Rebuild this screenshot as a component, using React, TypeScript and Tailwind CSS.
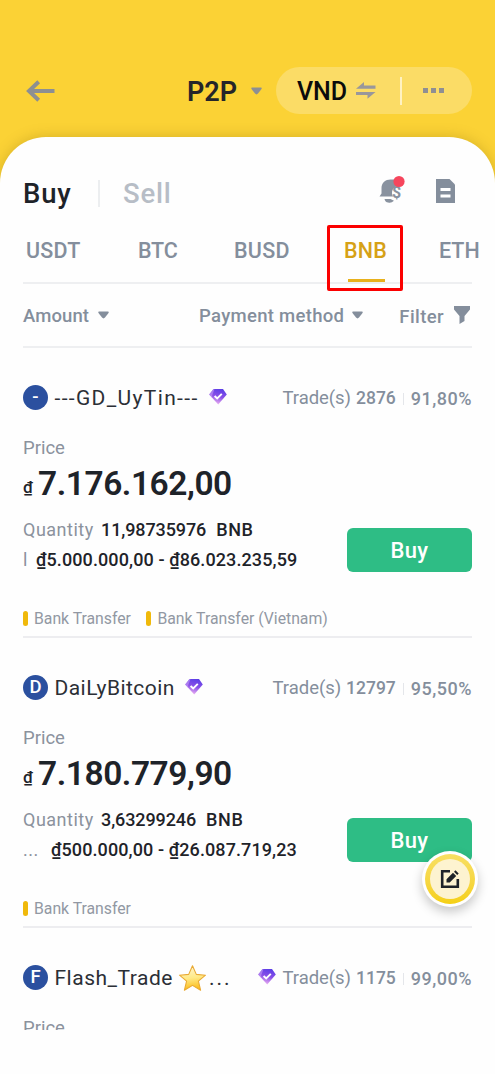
import React from "react";

const STRONG = "font-['Roboto',sans-serif] font-medium";
const MID = "font-['Roboto',sans-serif] font-[450]";
const TEXT = "font-['Roboto',sans-serif] font-normal";

function Caret({ className = "" }: { className?: string }) {
  return (
    <svg className={"h-[8px] w-[11px] shrink-0 " + className} viewBox="0 0 11 8" fill="currentColor">
      <path d="M1 .5h9q1.2.3.5 1.5L7 6.6q-1.5 1.6-3 0L.5 2Q-.2.8 1 .5Z" />
    </svg>
  );
}

function Gem() {
  return (
    <svg className="h-[18px] w-[20px]" viewBox="0 0 20 18">
      <defs>
        <linearGradient id="gem" x1=".7" y1="0" x2=".4" y2="1">
          <stop offset="0" stopColor="#5a3ee6" />
          <stop offset=".5" stopColor="#8a50e8" />
          <stop offset="1" stopColor="#f0b5f2" />
        </linearGradient>
      </defs>
      <path d="M5.500 1h9.500l3.800 5.600L10.200 16.400 1.200 6.600Z" fill="url(#gem)" />
      <path d="M1.200 6.600 5.500 1l1 .2-2.500 6.500v2Z" fill="#c49af5" opacity=".6" />
      <path d="m6.600 8 2.600 2.500 4.600-4.600" fill="none" stroke="#fff" strokeWidth="1.9" />
    </svg>
  );
}

function Star() {
  return (
    <svg className="h-[28px] w-[29px]" viewBox="0 0 29 28">
      <defs>
        <linearGradient id="star" x1=".4" y1="0" x2=".55" y2="1">
          <stop offset="0" stopColor="#fff6d2" />
          <stop offset=".5" stopColor="#ffe985" />
          <stop offset="1" stopColor="#fbb80f" />
        </linearGradient>
      </defs>
      <path
        d="M14.500 1.800 18.300 10.400l9.200.8-7.100 6 2.200 9-8.100-4.800-8.100 4.800 2.200-9-7.100-6 9.200-.8Z"
        fill="url(#star)"
        stroke="#e9aa35"
        strokeWidth="1.1"
        strokeLinejoin="round"
      />
    </svg>
  );
}

type Offer = {
  initial: string;
  name: string;
  nameTracking: string;
  star?: boolean;
  trades: string;
  rate: string;
  price: string;
  quantity: string;
  limitLabel: string;
  limitLabelWidth: string;
  limits: string;
  methods: string[];
};

const offers: Offer[] = [
  {
    initial: "-",
    name: "---GD_UyTin---",
    nameTracking: "tracking-[1.35px]",
    trades: "2876",
    rate: "91,80%",
    price: "7.176.162,00",
    quantity: "11,98735976",
    limitLabel: "l",
    limitLabelWidth: "w-[13px]",
    limits: "₫5.000.000,00 - ₫86.023.235,59",
    methods: ["Bank Transfer", "Bank Transfer (Vietnam)"],
  },
  {
    initial: "D",
    name: "DaiLyBitcoin",
    nameTracking: "tracking-[0.45px]",
    trades: "12797",
    rate: "95,50%",
    price: "7.180.779,90",
    quantity: "3,63299246",
    limitLabel: "...",
    limitLabelWidth: "w-[28px]",
    limits: "₫500.000,00 - ₫26.087.719,23",
    methods: ["Bank Transfer"],
  },
  {
    initial: "F",
    name: "Flash_Trade",
    nameTracking: "tracking-[0.5px]",
    star: true,
    trades: "1175",
    rate: "99,00%",
    price: "",
    quantity: "",
    limitLabel: "",
    limitLabelWidth: "",
    limits: "",
    methods: [],
  },
];

function OfferHead({ o }: { o: Offer }) {
  return (
    <div className="flex h-[26px] items-center whitespace-nowrap">
      <div className={"-mt-px flex size-[25px] items-center justify-center rounded-full bg-[#2b509f] text-[18.5px] leading-none text-white " + STRONG}>
        {o.initial}
      </div>
      <span className={"ml-[6.5px] text-[21px] leading-[26px] text-[#2b2f36] " + TEXT + " " + o.nameTracking}>{o.name}</span>
      {o.star && (
        <>
          <span className="ml-[5px]"><Star /></span>
          <span className={"ml-[2px] text-[21px] leading-[26px] tracking-[2px] text-[#2b2f36] " + TEXT}>...</span>
        </>
      )}
      <span className={o.star ? "ml-auto mr-[6px] -mt-[2px]" : "ml-[9px] mr-auto -mt-[2px]"}><Gem /></span>
      <div className="flex items-center pt-px text-[#848e9c]">
        <span className={"text-[18.5px] tracking-[-0.05px] " + TEXT}>Trade(s)</span>
        <span className={"ml-[5px] text-[17.5px] " + STRONG}>{o.trades}</span>
        <span className="mx-[7px] h-[12px] w-px bg-[#e4e6ea]" />
        <span className={"-mt-px text-[18px] tracking-[0.5px] " + STRONG}>{o.rate}</span>
      </div>
    </div>
  );
}

function OfferCard({ o }: { o: Offer }) {
  return (
    <section className="flex h-[290px] flex-col border-b-2 border-[#ededf0] pt-[37px]">
      <OfferHead o={o} />
      <div className={"mt-[26px] text-[18.5px] leading-[22px] text-[#8b929d] " + TEXT}>Price</div>
      <div className={"mt-[6px] flex h-[38px] items-baseline text-[#1e2329] " + STRONG}>
        <span className="relative -top-[2px] w-[15px] text-[17px]">₫</span>
        <span className="text-[33.5px] font-semibold leading-[38px] tracking-[-0.45px]">{o.price}</span>
      </div>
      <div className="mt-[8px] flex h-[76px] justify-between">
        <div className="whitespace-nowrap">
          <div className="mt-[6.5px] flex h-[24px] items-center text-[18px] leading-none">
            <span className={"w-[78px] tracking-[0.5px] text-[#8b929d] " + TEXT}>Quantity</span>
            <span className={"tracking-[-0.1px] text-[#1e2329] " + STRONG}>{o.quantity}</span>
            <span className={"ml-[10px] tracking-[0.6px] text-[#1e2329] " + STRONG}>BNB</span>
          </div>
          <div className="mt-[6.5px] flex h-[24px] items-center text-[18px] leading-none">
            <span className={"tracking-[0.5px] text-[#8b929d] " + TEXT + " " + o.limitLabelWidth}>{o.limitLabel}</span>
            <span className={"tracking-[0.1px] text-[#1e2329] " + STRONG}>{o.limits}</span>
          </div>
        </div>
        <button className={"mt-[17px] h-[44px] w-[125px] rounded-[6px] bg-[#2ebd85] pt-px text-[22px] leading-none tracking-[0.4px] text-white " + STRONG}>
          Buy
        </button>
      </div>
      <div className="mt-[22px] flex gap-[15.5px]">
        {o.methods.map((m) => (
          <div key={m} className="flex h-[20px] items-center">
            <span className="-mt-px h-[15px] w-[5px] rounded-[3px] bg-[#f0b90b]" />
            <span className={"ml-[6px] text-[15.8px] leading-none tracking-[-0.02px] text-[#9298a3] " + TEXT}>{m}</span>
          </div>
        ))}
      </div>
    </section>
  );
}

export default function App() {
  return (
    <main className="relative flex h-[1074px] w-[495px] flex-col overflow-hidden bg-[#fbd235]">
      <header className="flex h-[137px] shrink-0 items-center pl-[26px] pr-[23px] pt-[44px]">
        <svg className="h-[22px] w-[30px] text-[#8c8f92]" viewBox="0 0 30 22" fill="none" stroke="currentColor" strokeWidth="4">
          <path d="M28.5 11H3M12.700 1.800 3 11l9.700 9.200" />
        </svg>
        <span className="ml-[131px] w-[52px] pt-[3px] font-['Roboto',sans-serif] text-[27px] font-semibold leading-none text-[#252529]">P2P</span>
        <Caret className="ml-[12px] text-[#8d8f93]" />
        <div className="ml-auto flex h-[47px] w-[196px] items-center rounded-full bg-[#fbdc66]">
          <span className={"ml-[21px] w-[51px] pt-[2px] text-[25px] leading-none tracking-[-0.1px] text-[#0b0b0c] " + STRONG}>VND</span>
          <svg className="ml-[8px] h-[17px] w-[20px] text-[#99979b]" viewBox="0 0 20 17" fill="currentColor">
            <path d="M0 6.8 8 0v3.6h11.5v3.2ZM0 9.9h19.5l-8 6.8v-3.6H0Z" />
          </svg>
          <span className="ml-[24px] h-[28px] w-[2px] bg-[#fff2c2]" />
          <span className="ml-[21px] flex gap-[3px]">
            <i className="size-[5px] bg-[#8f8f93]" />
            <i className="size-[5px] bg-[#8f8f93]" />
            <i className="size-[5px] bg-[#8f8f93]" />
          </span>
        </div>
      </header>

      <div className="h-[937px] shrink-0 rounded-t-[46px] bg-[#fefefe] px-[23px] shadow-[0_0_14px_rgba(120,90,0,0.28)]">
        <div className="flex h-[82px] items-center pt-[30px]">
          <span className={"w-[75px] pt-px text-[27.5px] leading-none tracking-[0.8px] text-[#1e2329] " + STRONG}>Buy</span>
          <span className="h-[27px] w-[2px] bg-[#eceef0]" />
          <span className={"ml-[23px] pt-px text-[27.5px] leading-none tracking-[0.8px] text-[#b7bdc6] " + STRONG}>Sell</span>
          <svg className="-mt-[8px] ml-auto h-[30px] w-[28px]" viewBox="0 0 28 30">
            <path d="M.5 22.500 2.500 19.500V14C2.500 8.800 6.500 5.500 11.500 5.500H16c-.8 2.700.8 5.500 3.200 6.400-5.200.3-7.700 6-5.200 10.600Z" fill="#89929f" />
            <path d="M5.500 25h6l3.500 1.800q-2.800 2.700-5.800 1.800Q6 28 5.500 25Z" fill="#89929f" />
            <text x="13" y="24" className="font-['Roboto',sans-serif] text-[16px] font-bold" fill="#89929f">$</text>
            <circle cx="20" cy="7.500" r="5.600" fill="#f6465d" />
          </svg>
          <svg className="-mt-[5px] ml-[29px] mr-[17px] h-[24px] w-[19px]" viewBox="0 0 19 24">
            <path d="M0 0h13.500L19 5.500V24H0Z" fill="#848e9c" />
            <path d="M4.500 9h10v3h-10ZM4.500 15.500h10v3h-10Z" fill="#fff" />
          </svg>
        </div>

        <nav className={"relative flex h-[65px] border-b-2 border-[#eeeff1] pt-[19px] text-[21.500px] leading-[26px] whitespace-nowrap text-[#848e9c] " + STRONG}>
          <span className="ml-[3px] w-[112px] shrink-0 tracking-[0.200px]">USDT</span>
          <span className="w-[96px] shrink-0 tracking-[-0.200px]">BTC</span>
          <span className="w-[110px] shrink-0 tracking-[0.300px]">BUSD</span>
          <span className="w-[95px] shrink-0 tracking-[0.200px] text-[#d6a116]">BNB</span>
          <span className="shrink-0">ETH</span>
          <span className="absolute bottom-0 left-[325px] h-[3px] w-[37px] bg-[#e8b11c]" />
          <span className="absolute left-[304px] top-[6px] h-[66px] w-[76px] rounded-[2px] border-[3px] border-[#fb0000]" />
        </nav>

        <div className={"flex h-[64px] items-center border-b-2 border-[#eeeff1] text-[18.500px] leading-none whitespace-nowrap text-[#848e9c] " + STRONG}>
          <span className="w-[67px] pt-[2px] tracking-[0.100px]">Amount</span>
          <Caret className="ml-[8px]" />
          <span className="ml-[90px] w-[146px] pt-[2px] tracking-[0.300px]">Payment method</span>
          <Caret className="ml-[7px]" />
          <span className="ml-auto pt-[4px] tracking-[0.400px]">Filter</span>
          <svg className="ml-[10px] mr-[2px] h-[18px] w-[16px]" viewBox="0 0 16 18" fill="currentColor">
            <path d="M0 0h16v3.500L10.500 10v5L5.500 18v-8L0 3.500Z" />
          </svg>
        </div>

        <OfferCard o={offers[0]} />
        <OfferCard o={offers[1]} />
        <section className="h-[102px] overflow-hidden pt-[37px]">
          <OfferHead o={offers[2]} />
          <div className={"mt-[26px] text-[18.500px] leading-[22px] text-[#8b929d] " + TEXT}>Price</div>
        </section>
      </div>

      <button className="absolute left-[422px] top-[851px] flex size-[56px] items-center justify-center rounded-full bg-white shadow-[0_5px_11px_rgba(0,0,0,0.22)]">
        <span className="flex size-[50px] items-center justify-center rounded-full bg-linear-to-b from-[#f8df62] to-[#f5d010]">
          <span className="flex size-[40px] items-center justify-center rounded-full bg-[#fdf3d0]">
            <svg className="h-[20px] w-[20px]" viewBox="0 0 20 20">
              <path d="M10 2.200H2.200v15.600h15.600V10" fill="none" stroke="#1e2329" strokeWidth="2.600" />
              <path d="M6.500 13.500v-3.200L13 3.800l3.200 3.200-6.500 6.500ZM14 2.800 15.500 1.300l3.200 3.200L17.200 6Z" fill="#1e2329" />
            </svg>
          </span>
        </span>
      </button>
    </main>
  );
}
